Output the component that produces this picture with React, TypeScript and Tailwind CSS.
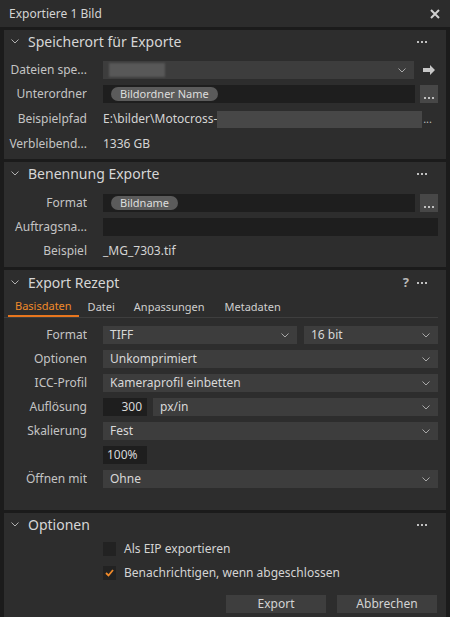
import type { ReactNode } from 'react';

const font = { fontFamily: '"Noto Sans", "Open Sans", sans-serif' };

function Chevron({ className = '' }: { className?: string }) {
  return (
    <svg width="8" height="5" viewBox="0 0 8 5" className={className}>
      <path d="M0.5 0.5 L4 4 L7.5 0.5" fill="none" stroke="currentColor" strokeWidth="1" />
    </svg>
  );
}

function Dots() {
  return (
    <div className="flex items-center gap-[2px]">
      <span className="h-[2px] w-[2px] bg-[#c0c0c0]" />
      <span className="h-[2px] w-[2px] bg-[#c0c0c0]" />
      <span className="h-[2px] w-[2px] bg-[#c0c0c0]" />
    </div>
  );
}

function SectionHeader({ title, extra }: { title: string; extra?: ReactNode }) {
  return (
    <div className="flex h-[23px] items-center pl-[7px] pr-[11px]">
      <Chevron className="text-[#b0b0b0]" />
      <span className="ml-[9px] text-[14px] text-[#d6d6d6]">{title}</span>
      <div className="ml-auto flex items-center gap-[8px]">
        {extra}
        <Dots />
      </div>
    </div>
  );
}

function Row({ label, children }: { label?: string; children: ReactNode }) {
  return (
    <div className="flex h-[18px] items-center">
      <div className="w-[83px] shrink-0 truncate text-right text-[12px] text-[#c4c4c4]">{label}</div>
      <div className="ml-[16px] flex min-w-0 flex-1 items-center">{children}</div>
    </div>
  );
}

function Select({ value, className = 'flex-1' }: { value: string; className?: string }) {
  return (
    <div className={`flex h-[18px] items-center bg-[#3d3d3d] pl-[7px] pr-[8px] text-[12px] text-[#d8d8d8] ${className}`}>
      <span>{value}</span>
      <Chevron className="ml-auto text-[#a8a8a8]" />
    </div>
  );
}

function MoreButton() {
  return (
    <div className="ml-[5px] flex h-[18px] w-[18px] items-end justify-center bg-[#474747] pb-[4px]">
      <Dots />
    </div>
  );
}

function Pill({ text }: { text: string }) {
  return (
    <span className="ml-[8px] flex h-[14px] items-center rounded-full bg-[#5b5b5b] px-[9px] text-[11px] text-[#dedede]">
      {text}
    </span>
  );
}

export default function App() {
  return (
    <div className="flex h-[617px] w-[450px] flex-col gap-[3px] bg-[#1b1b1b] px-[4px]" style={font}>
      <div className="-mx-[4px] flex h-[27px] items-center bg-[#2c2c2c] pl-[9px] pr-[10px]">
        <span className="text-[12px] text-[#d4d4d4]">Exportiere 1 Bild</span>
        <svg width="10" height="10" viewBox="0 0 10 10" className="ml-auto">
          <path d="M1 1 L9 9 M9 1 L1 9" stroke="#d0d0d0" strokeWidth="2" />
        </svg>
      </div>

      <div className="bg-[#2d2d2d] pb-[6px] pr-[8px]">
        <SectionHeader title="Speicherort für Exporte" />
        <div className="mt-[8px] flex flex-col gap-[6px]">
          <Row label="Dateien spe...">
            <div className="flex h-[18px] flex-1 items-center bg-[#3d3d3d] pl-[6px] pr-[8px]">
              <span className="h-[14px] w-[56px] bg-[#585858] blur-[1px]" />
              <Chevron className="ml-auto text-[#a8a8a8]" />
            </div>
            <svg width="13" height="10" viewBox="0 0 13 10" className="ml-[9px] mr-[2px]">
              <path d="M0 3 H7 V0 L12 5 L7 10 V7 H0 Z" fill="#c8c8c8" />
            </svg>
          </Row>
          <Row label="Unterordner">
            <div className="flex h-[18px] flex-1 items-center bg-[#1e1e1e]">
              <Pill text="Bildordner Name" />
            </div>
            <MoreButton />
          </Row>
          <div className="mt-[1px]">
            <Row label="Beispielpfad">
              <span className="text-[12px] text-[#d4d4d4]">E:\bilder\Motocross-</span>
              <span className="h-[17px] flex-1 bg-[#474747] blur-[0.5px]" />
              <span className="ml-[1px] mr-[6px] text-[11px] text-[#bcbcbc]">...</span>
            </Row>
          </div>
          <div className="mt-[1px]">
            <Row label="Verbleibend...">
              <span className="text-[12px] text-[#d4d4d4]">1336 GB</span>
            </Row>
          </div>
        </div>
      </div>

      <div className="bg-[#2d2d2d] pb-[7px] pr-[8px]">
        <SectionHeader title="Benennung Exporte" />
        <div className="mt-[9px] flex flex-col gap-[6px]">
          <Row label="Format">
            <div className="flex h-[18px] flex-1 items-center bg-[#1e1e1e]">
              <Pill text="Bildname" />
            </div>
            <MoreButton />
          </Row>
          <Row label="Auftragsna...">
            <div className="h-[18px] flex-1 bg-[#1e1e1e]" />
          </Row>
          <Row label="Beispiel">
            <span className="text-[12px] text-[#d4d4d4]">_MG_7303.tif</span>
          </Row>
        </div>
      </div>

      <div className="flex-1 bg-[#2d2d2d] pr-[8px]">
        <div className="pt-[1px]">
          <SectionHeader
            title="Export Rezept"
            extra={<span className="text-[13px] font-bold text-[#b8b8b8]">?</span>}
          />
        </div>
        <div className="mt-[5px] flex h-[19px] items-end border-b border-[#3e3e3e] pl-[4px] text-[11px] text-[#cfcfcf]">
          <span className="border-b-2 border-[#e8761e] px-[7px] pb-[1px] text-[#f08a2a]">Basisdaten</span>
          <span className="ml-[9px] pb-[2px]">Datei</span>
          <span className="ml-[19px] pb-[2px]">Anpassungen</span>
          <span className="ml-[20px] pb-[2px]">Metadaten</span>
        </div>
        <div className="mt-[8px] flex flex-col gap-[6px]">
          <Row label="Format">
            <Select value="TIFF" className="w-[194px]" />
            <Select value="16 bit" className="ml-[7px] flex-1" />
          </Row>
          <Row label="Optionen">
            <Select value="Unkomprimiert" />
          </Row>
          <Row label="ICC-Profil">
            <Select value="Kameraprofil einbetten" />
          </Row>
          <Row label="Auflösung">
            <div className="flex h-[18px] w-[44px] items-center justify-end bg-[#1e1e1e] pr-[5px] text-[12px] text-[#d8d8d8]">300</div>
            <Select value="px/in" className="ml-[6px] flex-1" />
          </Row>
          <Row label="Skalierung">
            <Select value="Fest" />
          </Row>
          <Row>
            <div className="flex h-[18px] w-[44px] items-center bg-[#1e1e1e] pl-[4px] text-[12px] text-[#d8d8d8]">100%</div>
          </Row>
          <Row label="Öffnen mit">
            <Select value="Ohne" />
          </Row>
        </div>
      </div>

      <div className="bg-[#2d2d2d] pb-[4px] pr-[8px]">
        <SectionHeader title="Optionen" />
        <div className="mt-[6px] flex flex-col gap-[10px] pl-[99px]">
          <div className="flex h-[14px] items-center">
            <span className="h-[14px] w-[13px] bg-[#222222]" />
            <span className="ml-[8px] text-[12px] text-[#d4d4d4]">Als EIP exportieren</span>
          </div>
          <div className="flex h-[14px] items-center">
            <span className="flex h-[14px] w-[13px] items-center justify-center bg-[#222222]">
              <svg width="9" height="8" viewBox="0 0 9 8">
                <path d="M1 4 L3.5 6.5 L8 1" fill="none" stroke="#f08a2a" strokeWidth="1.8" />
              </svg>
            </span>
            <span className="ml-[8px] text-[12px] text-[#d4d4d4]">Benachrichtigen, wenn abgeschlossen</span>
          </div>
        </div>
        <div className="mt-[15px] flex justify-end gap-[11px] pr-[1px]">
          <div className="flex h-[18px] w-[100px] items-center justify-center bg-[#3e3e3e] text-[12px] text-[#d4d4d4]">Export</div>
          <div className="flex h-[18px] w-[100px] items-center justify-center bg-[#3e3e3e] text-[12px] text-[#d4d4d4]">Abbrechen</div>
        </div>
      </div>
    </div>
  );
}
